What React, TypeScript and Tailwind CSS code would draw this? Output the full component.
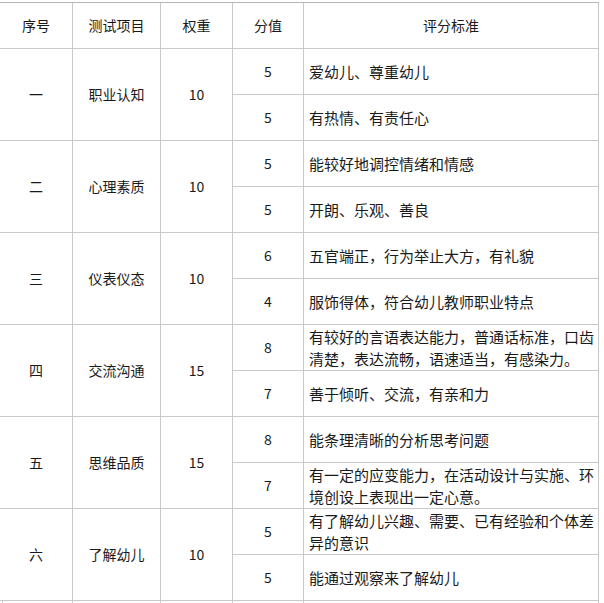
import React from "react";

type Group = {
  no: string;
  item: string;
  weight: string;
  rows: { score: string; text: string }[];
};

const groups: Group[] = [
  {
    no: "一",
    item: "职业认知",
    weight: "10",
    rows: [
      { score: "5", text: "爱幼儿、尊重幼儿" },
      { score: "5", text: "有热情、有责任心" },
    ],
  },
  {
    no: "二",
    item: "心理素质",
    weight: "10",
    rows: [
      { score: "5", text: "能较好地调控情绪和情感" },
      { score: "5", text: "开朗、乐观、善良" },
    ],
  },
  {
    no: "三",
    item: "仪表仪态",
    weight: "10",
    rows: [
      { score: "6", text: "五官端正，行为举止大方，有礼貌" },
      { score: "4", text: "服饰得体，符合幼儿教师职业特点" },
    ],
  },
  {
    no: "四",
    item: "交流沟通",
    weight: "15",
    rows: [
      { score: "8", text: "有较好的言语表达能力，普通话标准，口齿清楚，表达流畅，语速适当，有感染力。" },
      { score: "7", text: "善于倾听、交流，有亲和力" },
    ],
  },
  {
    no: "五",
    item: "思维品质",
    weight: "15",
    rows: [
      { score: "8", text: "能条理清晰的分析思考问题" },
      { score: "7", text: "有一定的应变能力，在活动设计与实施、环境创设上表现出一定心意。" },
    ],
  },
  {
    no: "六",
    item: "了解幼儿",
    weight: "10",
    rows: [
      { score: "5", text: "有了解幼儿兴趣、需要、已有经验和个体差异的意识" },
      { score: "5", text: "能通过观察来了解幼儿" },
    ],
  },
];

const cell = "flex items-center justify-center border-r border-b border-[#c9c9c9]";

export default function App() {
  return (
    <div
      className="h-[603px] w-[604px] overflow-hidden bg-white text-[14px] text-[#1a1a1a]"
      style={{ fontFamily: '"Noto Sans CJK SC", "Noto Sans", sans-serif' }}
    >
      <div className="mt-[2px] grid w-[599px] grid-cols-[73px_88px_72px_71px_295px] auto-rows-[46px] border-t border-[#b5b5b5]">
        <div className={cell}>序号</div>
        <div className={cell}>测试项目</div>
        <div className={cell}>权重</div>
        <div className={cell}>分值</div>
        <div className={cell}>评分标准</div>

        {groups.map((g) => (
          <React.Fragment key={g.no}>
            <div className={`${cell} row-span-2`}>{g.no}</div>
            <div className={`${cell} row-span-2`}>{g.item}</div>
            <div className={`${cell} row-span-2`}>{g.weight}</div>
            {g.rows.map((r, i) => (
              <React.Fragment key={i}>
                <div className={`${cell} ${i === 1 ? "col-start-4" : ""}`}>{r.score}</div>
                <div className="flex items-center border-r border-b border-[#c9c9c9] pl-[5px] pr-[2px] text-[15px] leading-[22px]">
                  <span>{r.text}</span>
                </div>
              </React.Fragment>
            ))}
          </React.Fragment>
        ))}
      </div>
      <div className="grid h-[3px] w-[599px] grid-cols-[73px_88px_72px_71px_295px]">
        <div className="ml-[2px] border-l border-r border-[#c9c9c9]" />
        <div className="border-r border-[#c9c9c9]" />
        <div className="border-r border-[#c9c9c9]" />
        <div className="border-r border-[#c9c9c9]" />
        <div className="border-r border-[#c9c9c9]" />
      </div>
    </div>
  );
}
